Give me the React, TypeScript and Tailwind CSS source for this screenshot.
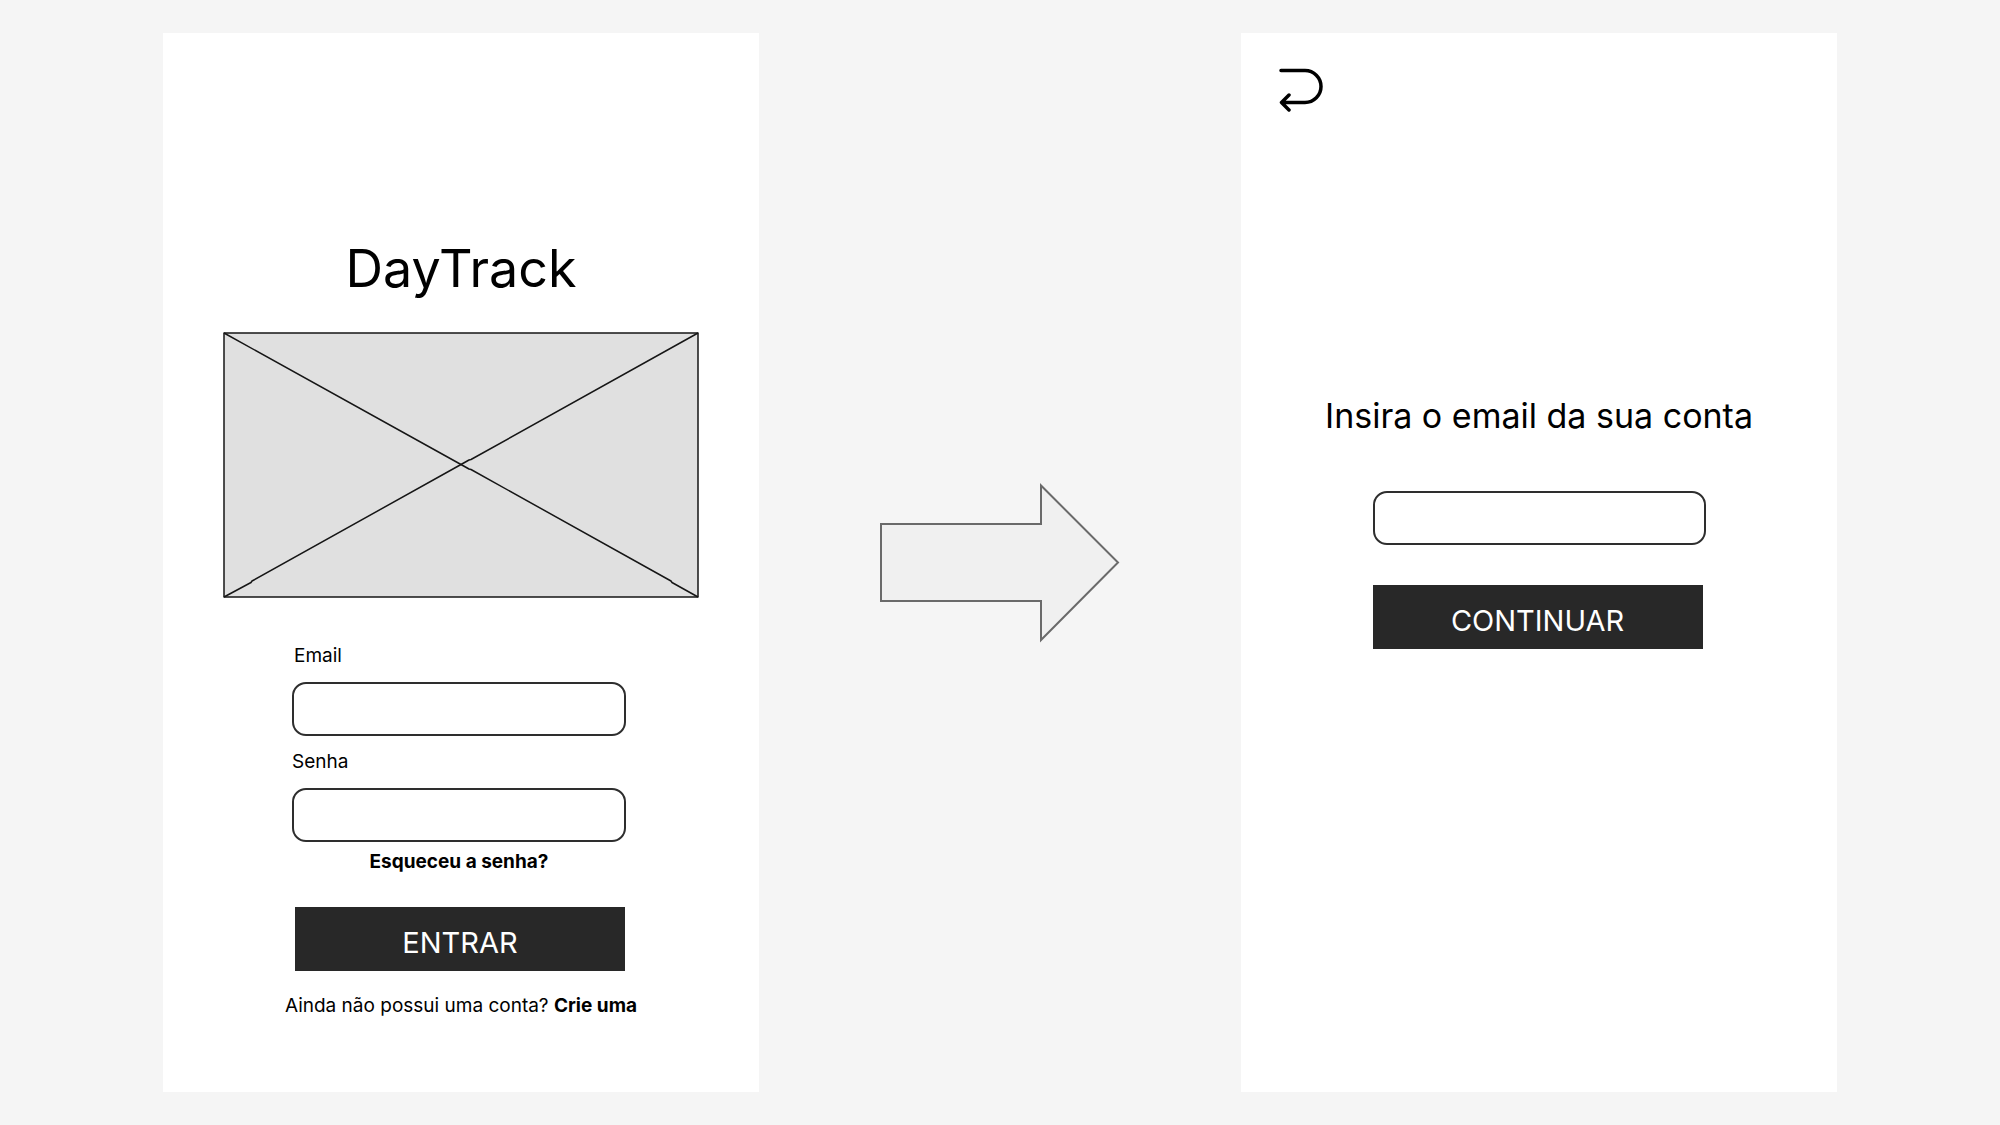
import React from "react";

const fieldClass =
  "block h-[54px] w-full rounded-[14px] border-2 border-[#2e2e2e] bg-white px-4 text-[19px] outline-none";
const buttonClass =
  "block h-16 w-[330px] bg-[#282828] pt-2 text-[29px] leading-9 text-white";

function ImagePlaceholder() {
  return (
    <svg
      className="mt-[27px] block w-[476px] max-w-full"
      viewBox="0 0 476 266"
      role="img"
      aria-label="Imagem"
      fill="none"
      stroke="#161616"
      strokeWidth="1.5"
      strokeLinejoin="round"
    >
      <rect x="1" y="1" width="474" height="264" fill="#e0e0e0" />
      <path d="M1 1 238 132.500 246 137 248 137.500 448 249 449 250.500 475 265" />
      <path d="M475 1 248 127.500 246 128 238 132.500 29 249 28 250.500 1 265" />
    </svg>
  );
}

function FlowArrow() {
  return (
    <svg
      className="w-[241px] max-w-full"
      viewBox="0 0 241 160"
      aria-hidden="true"
      fill="#f0f0f0"
      stroke="#6a6a6a"
      strokeWidth="2"
    >
      <path d="M2 41H162V2.500L239 79.500 162 157V118H2Z" />
    </svg>
  );
}

function ReturnIcon() {
  return (
    <svg
      className="block h-11 w-11"
      viewBox="0 0 44 44"
      aria-hidden="true"
      fill="none"
      stroke="#000"
      strokeWidth="3.5"
      strokeLinecap="round"
      strokeLinejoin="round"
    >
      <path d="M2 2.500H26A16 16 0 0 1 26 34.500H2.500M10 27 2.500 34.500 10 42" />
    </svg>
  );
}

function LoginScreen() {
  return (
    <section className="flex flex-col items-center bg-white px-4 pt-[200px] pb-8">
      <h1 className="text-[52px] leading-[72px]">DayTrack</h1>
      <ImagePlaceholder />
      <form className="mt-11 w-[338px] pr-1" onSubmit={(e) => e.preventDefault()}>
        <label htmlFor="email" className="block pl-0.5 text-[19px] leading-7">
          Email
        </label>
        <input id="email" type="email" className={`${fieldClass} mt-3`} />
        <label htmlFor="senha" className="mt-3 block text-[19px] leading-7">
          Senha
        </label>
        <input id="senha" type="password" className={`${fieldClass} mt-3`} />
        <a href="#esqueceu" className="mt-1.5 block text-center text-[19px] leading-7 font-bold">
          Esqueceu a senha?
        </a>
        <button type="submit" className={`${buttonClass} mt-[31px] ml-[3px]`}>
          ENTRAR
        </button>
      </form>
      <p className="mt-[21px] text-center text-[19px] leading-7">
        Ainda não possui uma conta?{" "}
        <a href="#criar" className="font-bold">
          Crie uma
        </a>
      </p>
    </section>
  );
}

function RecoverScreen() {
  return (
    <section className="flex flex-col bg-white pt-[35px] pb-8">
      <button type="button" aria-label="Voltar" className="ml-[38px] self-start">
        <ReturnIcon />
      </button>
      <form
        className="mt-[280px] flex flex-col items-center"
        onSubmit={(e) => e.preventDefault()}
      >
        <label htmlFor="conta" className="text-[34px] leading-[48px]">
          Insira o email da sua conta
        </label>
        <div className="mt-[51px] w-[333px]">
          <input id="conta" type="email" className={fieldClass} />
          <button type="submit" className={`${buttonClass} mt-10`}>
            CONTINUAR
          </button>
        </div>
      </form>
    </section>
  );
}

export default function App() {
  return (
    <main className="grid min-h-screen grid-cols-[596fr_482fr_596fr] bg-[#f5f5f5] px-[8.15%] py-[33px] font-['Inter',sans-serif] text-black">
      <LoginScreen />
      <div className="flex items-center justify-center">
        <FlowArrow />
      </div>
      <RecoverScreen />
    </main>
  );
}
